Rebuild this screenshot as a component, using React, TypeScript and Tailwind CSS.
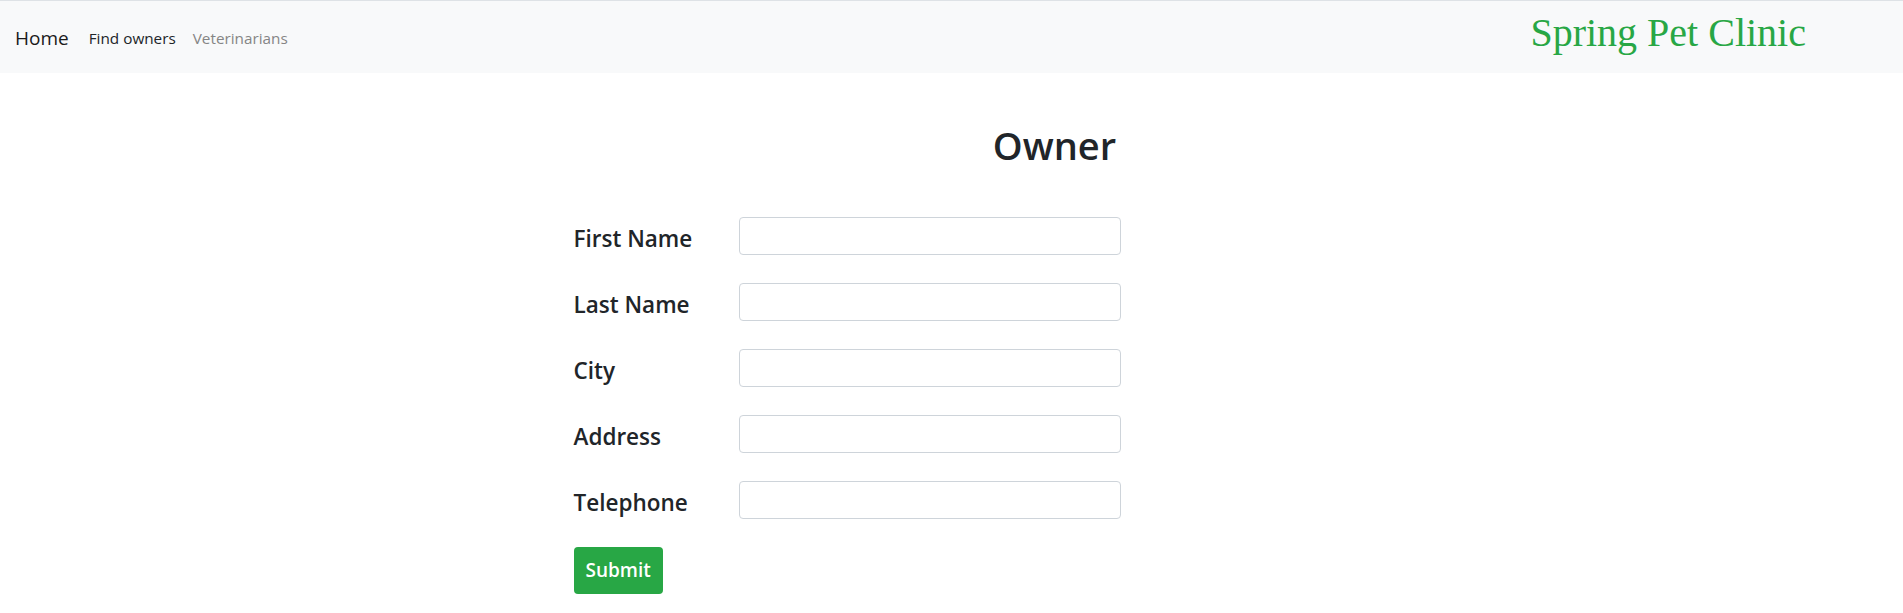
import React from "react";

const fields = ["First Name", "Last Name", "City", "Address", "Telephone"];

const Navbar = () => {
    return (
        <nav className="h-[73px] bg-[#f8f9fa] border-t border-[#dee2e6] flex items-center pl-[15px] pr-[97px] pt-[2px]">
            <a href="#" className="text-[19px] text-[#1a1a1a] mr-[20px]">Home</a>
            <a href="#" className="text-[15.3px] text-[#212529] mr-[17px]">Find owners</a>
            <a href="#" className="text-[15.3px] text-[#858585]">Veterinarians</a>
            <span className="ml-auto self-start mt-[6px] text-[40px] leading-[48px] text-[#28a745] font-['Liberation_Serif',serif]">
                Spring Pet Clinic
            </span>
        </nav>
    );
};

const App = () => {
    return (
        <div className="min-h-screen bg-white text-[#212529] font-['Open_Sans',sans-serif]">
            <Navbar />
            <main className="w-[1140px] mx-auto pl-[192px]">
                <h1 className="w-[962px] text-center text-[38px] leading-[1.2] font-semibold mt-[50px]">Owner</h1>
                <form className="mt-[48px] flex flex-col gap-[28px]" onSubmit={(e) => e.preventDefault()}>
                    {fields.map((f) => (
                        <div key={f} className="flex items-start">
                            <label className="w-[165px] pt-[8px] text-[22.5px] leading-[1.2] font-semibold">{f}</label>
                            <input
                                type="text"
                                className="w-[382px] h-[38px] border border-[#ced4da] rounded-[4px] bg-white px-3 outline-none"
                            />
                        </div>
                    ))}
                    <div>
                        <button
                            type="submit"
                            className="h-[47px] px-[12px] rounded-[4px] bg-[#28a745] text-white text-[19px] font-semibold"
                        >
                            Submit
                        </button>
                    </div>
                </form>
            </main>
        </div>
    );
};

export default App;
